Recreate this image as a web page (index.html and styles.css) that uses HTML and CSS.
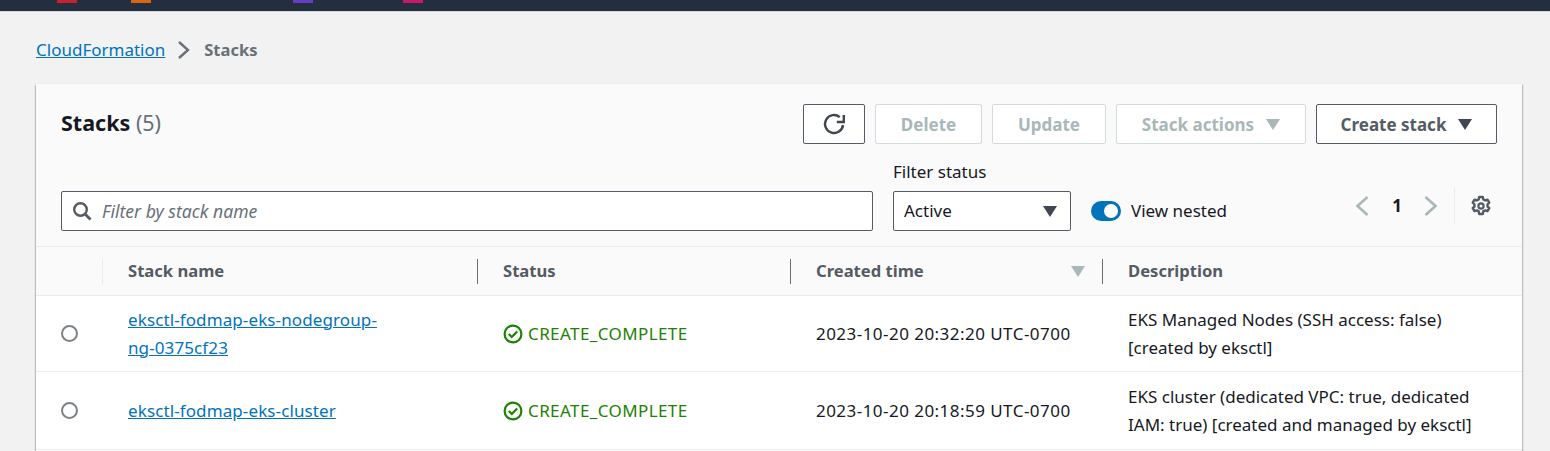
FILE: index.html
```html
<!DOCTYPE html>
<html>
<head>
  <title>Stacks</title>
  <link rel="stylesheet" href="styles.css">
</head>
<body>
  <div class="topbar">
    <span class="tab tab-red"></span>
    <span class="tab tab-orange"></span>
    <span class="tab tab-purple"></span>
    <span class="tab tab-pink"></span>
  </div>

  <div class="content">
    <div class="breadcrumb">
      <a href="#">CloudFormation</a>
      <svg class="crumb-sep" width="14" height="20" viewBox="0 0 14 20"><path d="M2 2l9 8-9 8" fill="none" stroke="#687078" stroke-width="2.4"/></svg>
      <span class="crumb-current">Stacks</span>
    </div>

    <div class="card">
      <div class="card-head">
        <div class="title-row">
          <h1>Stacks <span class="count">(5)</span></h1>
          <div class="actions">
            <button class="btn btn-icon">
              <svg width="24" height="24" viewBox="0 0 24 24"><path d="M21 13a9 9 0 1 1-3.2-7.9" fill="none" stroke="#414750" stroke-width="2.4"/><path d="M21.8 3v7h-7" fill="none" stroke="#414750" stroke-width="2.4"/></svg>
            </button>
            <button class="btn btn-off w-delete">Delete</button>
            <button class="btn btn-off w-update">Update</button>
            <button class="btn btn-off w-actions">Stack actions <i class="caret caret-off"></i></button>
            <button class="btn w-create">Create stack <i class="caret"></i></button>
          </div>
        </div>

        <div class="filter-row">
          <div class="search">
            <svg width="20" height="20" viewBox="0 0 20 20"><circle cx="8.5" cy="8.5" r="6.3" fill="none" stroke="#545b64" stroke-width="2.4"/><path d="M13 13l5.5 5.5" stroke="#545b64" stroke-width="2.8"/></svg>
            <span class="placeholder">Filter by stack name</span>
          </div>
          <div class="status-filter">
            <label class="field-label">Filter status</label>
            <div class="select">Active <i class="caret"></i></div>
          </div>
          <div class="toggle-wrap">
            <span class="toggle"><span class="knob"></span></span>
            <span>View nested</span>
          </div>
          <div class="pager">
            <svg width="14" height="22" viewBox="0 0 14 22"><path d="M12.5 2L2.5 11l10 9" fill="none" stroke="#aab7b8" stroke-width="2.6"/></svg>
            <b>1</b>
            <svg width="14" height="22" viewBox="0 0 14 22"><path d="M1.5 2l10 9-10 9" fill="none" stroke="#aab7b8" stroke-width="2.6"/></svg>
            <span class="pager-sep"></span>
            <svg class="gear" width="22" height="22" viewBox="0 0 22 22">
              <path d="M9.2 2h3.6l.5 2.4 1.9 1 2.3-.8 1.8 3.1-1.8 1.6v2.2l1.8 1.6-1.8 3.1-2.3-.8-1.9 1-.5 2.6H9.2l-.5-2.6-1.9-1-2.3.8-1.8-3.1 1.8-1.6V9.3L2.7 7.7l1.8-3.1 2.3.8 1.9-1z" fill="none" stroke="#545b64" stroke-width="2.4" stroke-linejoin="round"/>
              <circle cx="11" cy="11" r="2.6" fill="none" stroke="#545b64" stroke-width="2.2"/>
            </svg>
          </div>
        </div>
      </div>

      <table class="stacks">
        <colgroup>
          <col class="col-radio"><col class="col-name"><col class="col-status"><col class="col-time"><col>
        </colgroup>
        <thead>
          <tr>
            <th></th>
            <th><span class="th-in th-first">Stack name</span></th>
            <th><span class="th-in">Status</span></th>
            <th><span class="th-in">Created time <i class="caret caret-off caret-sort"></i></span></th>
            <th><span class="th-in">Description</span></th>
          </tr>
        </thead>
        <tbody>
          <tr class="row-first">
            <td class="radio-cell"><span class="radio"></span></td>
            <td><a class="stack-link" href="#">eksctl-fodmap-eks-nodegroup-<br>ng-0375cf23</a></td>
            <td>
              <span class="status">
                <svg width="20" height="20" viewBox="0 0 20 20"><circle cx="10" cy="10" r="8.4" fill="none" stroke="#1d8102" stroke-width="2.2"/><path d="M5.8 10l3 3 5.4-5.6" fill="none" stroke="#1d8102" stroke-width="2.2"/></svg>
                CREATE_COMPLETE
              </span>
            </td>
            <td class="time">2023-10-20 20:32:20 UTC-0700</td>
            <td>EKS Managed Nodes (SSH access: false)<br>[created by eksctl]</td>
          </tr>
          <tr>
            <td class="radio-cell"><span class="radio"></span></td>
            <td><a class="stack-link" href="#">eksctl-fodmap-eks-cluster</a></td>
            <td>
              <span class="status">
                <svg width="20" height="20" viewBox="0 0 20 20"><circle cx="10" cy="10" r="8.4" fill="none" stroke="#1d8102" stroke-width="2.2"/><path d="M5.8 10l3 3 5.4-5.6" fill="none" stroke="#1d8102" stroke-width="2.2"/></svg>
                CREATE_COMPLETE
              </span>
            </td>
            <td class="time">2023-10-20 20:18:59 UTC-0700</td>
            <td>EKS cluster (dedicated VPC: true, dedicated<br>IAM: true) [created and managed by eksctl]</td>
          </tr>
          <tr class="row-cut">
            <td></td><td></td><td></td><td></td><td></td>
          </tr>
        </tbody>
      </table>
    </div>
  </div>
</body>
</html>
```

FILE: styles.css
```css
html, body {
  height: 451px;
  overflow: hidden;
}

body {
  margin: 0;
  background-color: #f2f2f2;
  color: #16191f;
  font-family: "Noto Sans", Roboto, sans-serif;
  font-size: 17px;
  line-height: 28px;
}

a {
  color: #0073bb;
}

.topbar {
  display: flex;
  height: 11px;
  background-color: #232f3e;
  border-bottom: 1px solid #d5dbdb;
}

.tab {
  width: 20px;
  height: 3px;
}

.tab-red { margin-left: 57px; background-color: #c7202f; }
.tab-orange { margin-left: 54px; background-color: #d86613; }
.tab-purple { margin-left: 142px; background-color: #693cc5; }
.tab-pink { margin-left: 90px; background-color: #c7186b; }

.content {
  padding: 24px 28px 0 36px;
}

.breadcrumb {
  display: flex;
  align-items: center;
  height: 28px;
}

.crumb-sep {
  margin: 0 13px 0 12px;
}

.crumb-current {
  color: #687078;
  font-size: 16.5px;
  font-weight: 700;
}

.card {
  margin-top: 20px;
  background-color: #fff;
  box-shadow: 0 1px 2px rgba(0, 28, 36, 0.3), 1px 1px 1px rgba(0, 28, 36, 0.15), -1px 1px 1px rgba(0, 28, 36, 0.15);
}

.card-head {
  height: 163px;
  box-sizing: border-box;
  padding: 20px 25px 0;
  background-color: #fafafa;
  border-bottom: 1px solid #eaeded;
}

.title-row {
  display: flex;
  justify-content: space-between;
}

h1 {
  margin: 5px 0 0;
  font-size: 21.5px;
  line-height: 28px;
  font-weight: 700;
}

.count {
  color: #687078;
  font-weight: 400;
}

.actions {
  display: flex;
  gap: 10px;
}

.btn {
  display: flex;
  align-items: center;
  justify-content: center;
  gap: 12px;
  height: 40px;
  padding: 0;
  background-color: #fff;
  border: 1px solid #545b64;
  border-radius: 2px;
  color: #545b64;
  font: 700 17px "Noto Sans", sans-serif;
}

.btn-icon { width: 62px; }
.w-delete { width: 107px; }
.w-update { width: 114px; }
.w-actions { width: 190px; }
.w-create { width: 181px; }

.btn-off {
  border-color: #d5dbdb;
  color: #aab7b8;
}

.caret {
  display: inline-block;
  width: 0;
  height: 0;
  border-left: 7px solid transparent;
  border-right: 7px solid transparent;
  border-top: 11px solid #414750;
}

.caret-off {
  border-top-color: #aab7b8;
}

.filter-row {
  display: flex;
  align-items: flex-end;
  margin-top: 16px;
}

.search {
  display: flex;
  align-items: center;
  gap: 10px;
  width: 812px;
  height: 40px;
  box-sizing: border-box;
  padding-left: 10px;
  background-color: #fff;
  border: 1px solid #545b64;
  border-radius: 2px;
}

.placeholder {
  color: #687078;
  font-size: 17.6px;
  font-style: italic;
}

.status-filter {
  margin-left: 20px;
}

.field-label {
  display: block;
  height: 31px;
  line-height: 24px;
}

.select {
  display: flex;
  align-items: center;
  justify-content: space-between;
  width: 178px;
  height: 40px;
  box-sizing: border-box;
  padding: 0 13px 0 10px;
  background-color: #fff;
  border: 1px solid #545b64;
  border-radius: 2px;
}

.toggle-wrap {
  display: flex;
  align-items: center;
  gap: 10px;
  height: 40px;
  margin-left: 20px;
}

.toggle {
  display: flex;
  justify-content: flex-end;
  align-items: center;
  width: 30px;
  height: 20px;
  box-sizing: border-box;
  padding-right: 3px;
  background-color: #0073bb;
  border-radius: 10px;
}

.knob {
  width: 14px;
  height: 14px;
  background-color: #fff;
  border-radius: 50%;
}

.pager {
  display: flex;
  align-items: center;
  height: 40px;
  margin-left: auto;
  margin-right: 5px;
  margin-bottom: 5px;
}

.pager b {
  margin: 0 22px 0 23px;
}

.pager-sep {
  width: 1px;
  height: 36px;
  margin: 0 15px 0 16px;
  background-color: #eaeded;
}

.stacks {
  width: 100%;
  table-layout: fixed;
  border-collapse: collapse;
}

.col-radio { width: 66px; }
.col-name { width: 375px; }
.col-status { width: 313px; }
.col-time { width: 312px; }

.stacks th {
  height: 48px;
  padding: 0;
  background-color: #fafafa;
  border-bottom: 1px solid #eaeded;
  color: #545b64;
  font-size: 16.6px;
  font-weight: 700;
  text-align: left;
}

.th-in {
  display: flex;
  align-items: center;
  justify-content: space-between;
  height: 25px;
  padding: 0 17px 0 25px;
  border-left: 1px solid #687078;
}

.th-first {
  border-left-color: #eaeded;
}

.stacks td {
  height: 77px;
  padding: 0 26px;
  border-bottom: 1px solid #eaeded;
  vertical-align: middle;
}

.stacks .row-first td {
  height: 75px;
}

.stacks .row-cut td {
  height: 1px;
  border-bottom: 0;
}

.stacks td.radio-cell {
  padding: 0 0 0 25px;
}

.stack-link {
  letter-spacing: 0.11px;
}

.time {
  letter-spacing: 0.46px;
}

.radio {
  display: block;
  width: 13px;
  height: 13px;
  background-color: #fff;
  border: 2px solid #7d8288;
  border-radius: 50%;
}

.status {
  display: flex;
  align-items: center;
  gap: 5px;
  color: #1d8102;
  letter-spacing: 0.4px;
}
```
